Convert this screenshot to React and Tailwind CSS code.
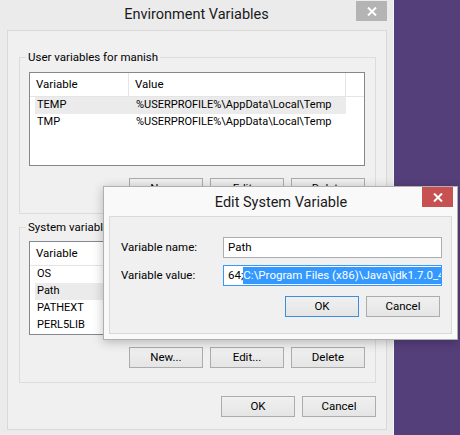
import React from "react";

const font = { fontFamily: '"Segoe UI", Roboto, "Liberation Sans", sans-serif' };

const userVars = [
  { name: "TEMP", value: "%USERPROFILE%\\AppData\\Local\\Temp", selected: true },
  { name: "TMP", value: "%USERPROFILE%\\AppData\\Local\\Temp" },
];

const systemVars = [
  { name: "OS", value: "Windows_NT" },
  { name: "Path", value: "C:\\ProgramData\\Oracle\\Java\\javapath", selected: true },
  { name: "PATHEXT", value: ".COM;.EXE;.BAT;.CMD;.VBS;.VBE;.JS" },
  { name: "PERL5LIB", value: "" },
];

const CloseX = () => (
  <svg width="10" height="9" viewBox="0 0 10 9">
    <path d="M1 0.5 L9 8.5 M9 0.5 L1 8.5" stroke="white" strokeWidth="2" />
  </svg>
);

const Button = ({ children, primary }) => (
  <button
    className={`w-[74px] h-[21px] text-[11.5px] leading-none text-black border bg-linear-to-b from-[#f0f0f0] to-[#e5e5e5] ${
      primary ? "border-[#3c8fe0]" : "border-[#acacac]"
    }`}
  >
    {children}
  </button>
);

const ListBox = ({ rows }) => (
  <div className="h-[94px] border border-[#828790] bg-white overflow-hidden">
    <div className="flex h-[24px] border-b border-[#e5e5e5] text-[11.5px]">
      <div className="w-[99px] pl-[6px] flex items-center border-r border-[#e5e5e5]">Variable</div>
      <div className="w-[217px] pl-[6px] flex items-center border-r border-[#e5e5e5]">Value</div>
    </div>
    {rows.map((r) => (
      <div
        key={r.name}
        className={`ml-[5px] w-[311px] h-[17px] flex items-center text-[11px] whitespace-nowrap ${
          r.selected ? "bg-[#ebebeb]" : ""
        }`}
      >
        <div className="w-[95px] pl-[2px]">{r.name}</div>
        <div className="pl-[6px] overflow-hidden">{r.value}</div>
      </div>
    ))}
  </div>
);

const Group = ({ label, rows, className }) => (
  <div className={`relative w-[357px] border border-[#dcdcdc] pl-[9px] pr-[10px] ${className}`}>
    <span className="absolute -top-[9px] left-[6px] px-[2px] bg-[#f0f0f0] text-[11.5px] leading-[16px]">
      {label}
    </span>
    <ListBox rows={rows} />
    <div className="flex justify-end gap-[7px] mt-[12px]">
      <Button>New...</Button>
      <Button>Edit...</Button>
      <Button>Delete</Button>
    </div>
  </div>
);

export default function App() {
  return (
    <div className="relative flex w-[460px] h-[435px] bg-[#553f7b] overflow-hidden text-black" style={font}>
      {/* Environment Variables window */}
      <div className="w-[394px] h-[435px] shrink-0 bg-[#ebebeb] border-r border-[#f6f6f6] flex flex-col">
        <div className="flex h-[30px] items-start">
          <div className="w-[37px]" />
          <div className="flex-1 text-center text-[14.5px] leading-[30px] text-[#1a1a1a]">Environment Variables</div>
          <div className="w-[31px] h-[20px] mt-[1px] mr-[6px] bg-[#b4b4b4] flex items-center justify-center">
            <CloseX />
          </div>
        </div>
        <div className="ml-[7px] w-[380px] h-[400px] border border-[#d9d9d9] bg-[#f0f0f0] pl-[11px] pt-[26px]">
          <Group label="User variables for manish" rows={userVars} className="h-[157px] pt-[14px]" />
          <Group label="System variables" rows={systemVars} className="h-[156px] pt-[13px] mt-[13px]" />
          <div className="flex justify-end gap-[7px] mt-[13px] w-[357px]">
            <Button>OK</Button>
            <Button>Cancel</Button>
          </div>
        </div>
      </div>

      {/* Edit System Variable dialog */}
      <div className="absolute left-[103px] top-[186px] w-[355px] h-[154px] bg-[#f9f9f9] border border-[#b0b0b0] shadow-[0_2px_10px_rgba(0,0,0,0.25)] flex flex-col">
        <div className="flex h-[29px] items-start">
          <div className="w-[36px]" />
          <div className="flex-1 text-center text-[14.5px] leading-[32px] text-[#1a1a1a]">Edit System Variable</div>
          <div className="w-[31px] h-[20px] mr-[4px] bg-[#c75050] flex items-center justify-center">
            <CloseX />
          </div>
        </div>
        <div className="ml-[5px] w-[343px] h-[118px] border border-[#dadada] bg-[#f0f0f0] pl-[11px] pr-[9px] pt-[20px] text-[11.5px]">
          <div className="flex items-center h-[21px]">
            <div className="w-[102px]">Variable name:</div>
            <div className="w-[219px] h-[21px] border border-[#abadb3] bg-white pl-[4px] flex items-center">Path</div>
          </div>
          <div className="flex items-center h-[21px] mt-[7px]">
            <div className="w-[102px]">Variable value:</div>
            <div className="w-[219px] h-[21px] border border-[#3399ff] bg-white pl-[4px] flex items-center overflow-hidden whitespace-nowrap">
              <span className="shrink-0">64;</span>
              <span className="shrink-0 bg-[#3399ff] text-white">C:\Program Files (x86)\Java\jdk1.7.0_45\bin</span>
            </div>
          </div>
          <div className="flex justify-end gap-[7px] mt-[10px] pr-[2px]">
            <Button primary>OK</Button>
            <Button>Cancel</Button>
          </div>
        </div>
      </div>
    </div>
  );
}
